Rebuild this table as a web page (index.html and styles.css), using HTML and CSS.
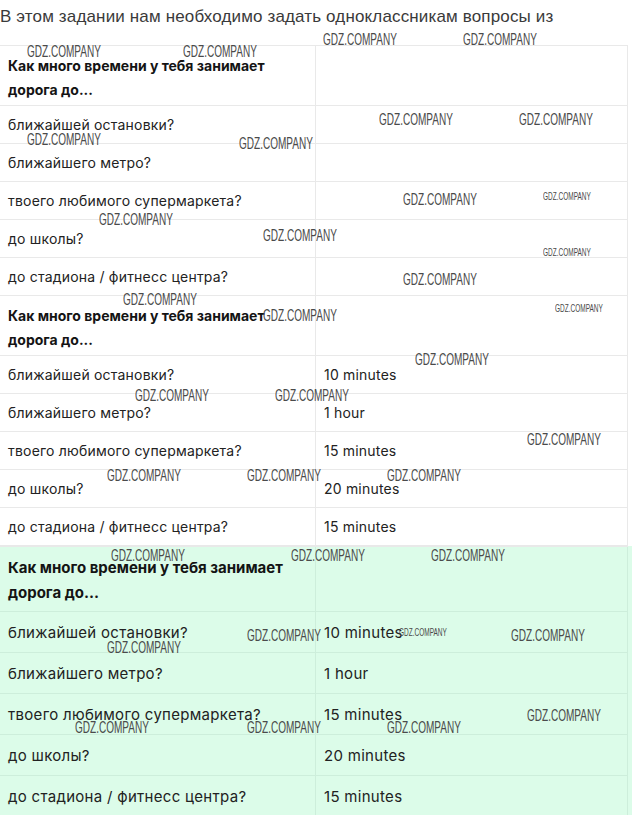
FILE: index.html
```html
<!DOCTYPE html>
<html lang="ru">
<head>
<meta charset="utf-8">
<title>Как много времени</title>
<link rel="stylesheet" href="styles.css">
</head>
<body>
<div class="page">
  <p class="intro">В этом задании нам необходимо задать одноклассникам вопросы из</p>

  <div class="tbl">
    <div class="c l hd">Как много времени у тебя занимает<br>дорога до...</div><div class="c r hd"></div>
    <div class="c l">ближайшей остановки?</div><div class="c r"></div>
    <div class="c l">ближайшего метро?</div><div class="c r"></div>
    <div class="c l">твоего любимого супермаркета?</div><div class="c r"></div>
    <div class="c l">до школы?</div><div class="c r"></div>
    <div class="c l">до стадиона / фитнесс центра?</div><div class="c r"></div>
  </div>

  <div class="tbl">
    <div class="c l hd">Как много времени у тебя занимает<br>дорога до...</div><div class="c r hd"></div>
    <div class="c l">ближайшей остановки?</div><div class="c r">10 minutes</div>
    <div class="c l">ближайшего метро?</div><div class="c r">1 hour</div>
    <div class="c l">твоего любимого супермаркета?</div><div class="c r">15 minutes</div>
    <div class="c l">до школы?</div><div class="c r">20 minutes</div>
    <div class="c l">до стадиона / фитнесс центра?</div><div class="c r">15 minutes</div>
  </div>

  <div class="green">
    <div class="tbl big">
      <div class="c l hd">Как много времени у тебя занимает<br>дорога до...</div><div class="c r hd"></div>
      <div class="c l">ближайшей остановки?</div><div class="c r">10 minutes</div>
      <div class="c l">ближайшего метро?</div><div class="c r">1 hour</div>
      <div class="c l">твоего любимого супермаркета?</div><div class="c r">15 minutes</div>
      <div class="c l">до школы?</div><div class="c r">20 minutes</div>
      <div class="c l">до стадиона / фитнесс центра?</div><div class="c r">15 minutes</div>
    </div>
  </div>

  <div class="wm-layer" aria-hidden="true">
    <span class="wm" style="left:27px;top:43px">GDZ.COMPANY</span>
    <span class="wm" style="left:183px;top:43px">GDZ.COMPANY</span>
    <span class="wm" style="left:323px;top:31px">GDZ.COMPANY</span>
    <span class="wm" style="left:463px;top:31px">GDZ.COMPANY</span>
    <span class="wm" style="left:379px;top:111px">GDZ.COMPANY</span>
    <span class="wm" style="left:519px;top:111px">GDZ.COMPANY</span>
    <span class="wm" style="left:27px;top:131px">GDZ.COMPANY</span>
    <span class="wm" style="left:239px;top:135px">GDZ.COMPANY</span>
    <span class="wm" style="left:403px;top:191px">GDZ.COMPANY</span>
    <span class="wm sm" style="left:543px;top:191px">GDZ.COMPANY</span>
    <span class="wm" style="left:99px;top:211px">GDZ.COMPANY</span>
    <span class="wm" style="left:263px;top:227px">GDZ.COMPANY</span>
    <span class="wm sm" style="left:543px;top:247px">GDZ.COMPANY</span>
    <span class="wm" style="left:403px;top:271px">GDZ.COMPANY</span>
    <span class="wm" style="left:123px;top:291px">GDZ.COMPANY</span>
    <span class="wm" style="left:263px;top:307px">GDZ.COMPANY</span>
    <span class="wm sm" style="left:555px;top:303px">GDZ.COMPANY</span>
    <span class="wm" style="left:415px;top:351px">GDZ.COMPANY</span>
    <span class="wm" style="left:135px;top:387px">GDZ.COMPANY</span>
    <span class="wm" style="left:275px;top:387px">GDZ.COMPANY</span>
    <span class="wm" style="left:527px;top:431px">GDZ.COMPANY</span>
    <span class="wm" style="left:107px;top:467px">GDZ.COMPANY</span>
    <span class="wm" style="left:247px;top:467px">GDZ.COMPANY</span>
    <span class="wm" style="left:387px;top:467px">GDZ.COMPANY</span>
    <span class="wm" style="left:111px;top:547px">GDZ.COMPANY</span>
    <span class="wm" style="left:291px;top:547px">GDZ.COMPANY</span>
    <span class="wm" style="left:431px;top:547px">GDZ.COMPANY</span>
    <span class="wm" style="left:247px;top:627px">GDZ.COMPANY</span>
    <span class="wm sm" style="left:399px;top:627px">GDZ.COMPANY</span>
    <span class="wm" style="left:511px;top:627px">GDZ.COMPANY</span>
    <span class="wm" style="left:107px;top:639px">GDZ.COMPANY</span>
    <span class="wm" style="left:527px;top:707px">GDZ.COMPANY</span>
    <span class="wm" style="left:75px;top:719px">GDZ.COMPANY</span>
    <span class="wm" style="left:247px;top:719px">GDZ.COMPANY</span>
    <span class="wm" style="left:387px;top:719px">GDZ.COMPANY</span>
  </div>
</div>
</body>
</html>
```

FILE: styles.css
```css
html, body {
  margin: 0;
  padding: 0;
  background: #ffffff;
}

.page {
  position: relative;
  width: 632px;
  height: 815px;
  overflow: hidden;
}

.intro {
  margin: 0;
  box-sizing: border-box;
  height: 45px;
  padding-top: 7px;
  font-family: "Liberation Sans", Arial, sans-serif;
  font-size: 17px;
  line-height: 20px;
  letter-spacing: 0.15px;
  color: #3a3a3a;
  white-space: nowrap;
}

.tbl {
  display: grid;
  grid-template-columns: 316px 312px;
  width: 628px;
  font-family: Inter, "Noto Sans", sans-serif;
  font-size: 14px;
  color: #222222;
}

.tbl:first-of-type {
  border-top: 1px solid #e9e9e9;
}

.c {
  box-sizing: border-box;
  height: 38px;
  display: flex;
  align-items: center;
  padding-left: 8px;
  border-bottom: 1px solid #e9e9e9;
  border-right: 1px solid #e9e9e9;
  white-space: nowrap;
  letter-spacing: 0.2px;
}

.c.hd {
  height: 60px;
  align-items: flex-start;
  padding-top: 8px;
  line-height: 24px;
  font-weight: 700;
  letter-spacing: 0;
  color: #141414;
}

.green {
  width: 632px;
  background: #dcfce9;
}

.tbl.big {
  font-size: 15px;
}

.tbl.big .c {
  height: 41px;
  border-color: #cdeedb;
  letter-spacing: 0.3px;
}

.tbl.big .c.hd {
  height: 65px;
  line-height: 25px;
  letter-spacing: 0;
}

.wm-layer {
  position: absolute;
  left: 0;
  top: 0;
  width: 632px;
  height: 815px;
  pointer-events: none;
}

.wm {
  position: absolute;
  font-family: "Liberation Sans", Arial, sans-serif;
  font-size: 17px;
  line-height: 17px;
  color: #4a4a4a;
  white-space: nowrap;
  transform: scaleX(0.59);
  transform-origin: left top;
}

.wm.sm {
  font-size: 11px;
  line-height: 11px;
}
```
